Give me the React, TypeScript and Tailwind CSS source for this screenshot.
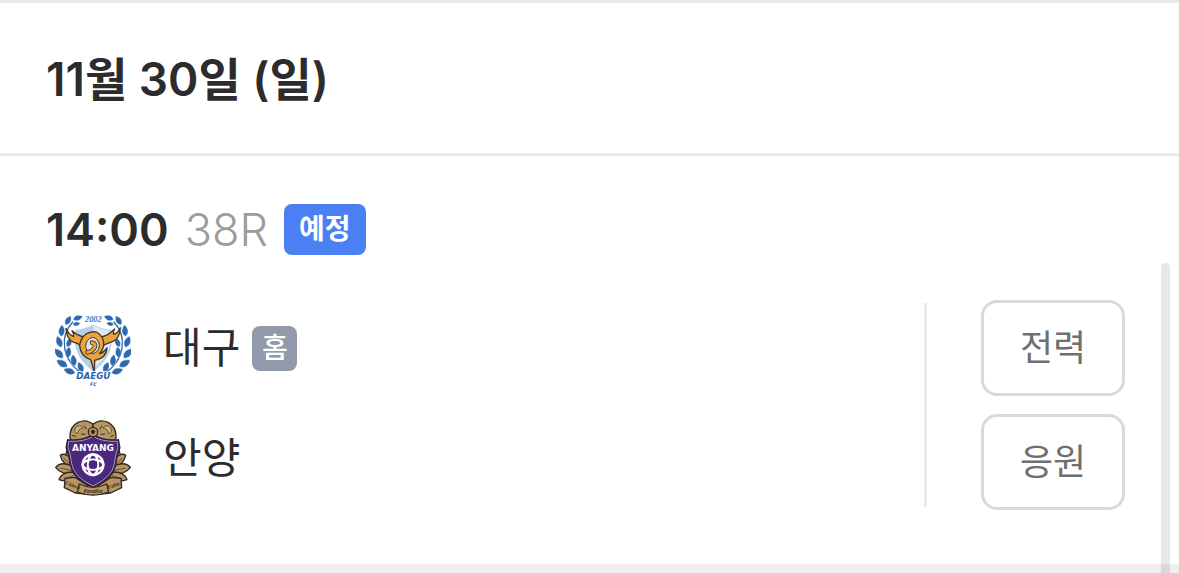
import type { ReactNode } from 'react'

type Team = { name: string; home?: boolean; emblem: ReactNode }

// One leaf of the Daegu laurel, pointing up before it is rotated.
const leaf = 'M0 15 C-12 6 -10 -6 0 -17 C10 -6 12 6 0 15Z'

const laurel = [
  { x: 98, y: 39, r: 72, s: 0.95 },
  { x: 69, y: 47, r: 30, s: 1 },
  { x: 94, y: 57, r: 80, s: 0.7 },
  { x: 50, y: 78, r: 4, s: 1.1 },
  { x: 43, y: 111, r: -20, s: 1.15 },
  { x: 72, y: 113, r: 22, s: 0.95 },
  { x: 42, y: 146, r: -42, s: 1.2 },
  { x: 70, y: 143, r: 8, s: 1.05 },
  { x: 52, y: 176, r: -60, s: 1.2 },
  { x: 86, y: 167, r: -8, s: 1.1 },
  { x: 74, y: 199, r: -72, s: 1.15 },
  { x: 107, y: 187, r: -24, s: 1.05 },
]

function LaurelHalf() {
  return (
    <g>
      <path d="M84 50 C43 93 49 164 111 205" fill="none" stroke="#2d69b0" strokeWidth="4" />
      {laurel.map((l) => (
        <path
          key={`${l.x}-${l.y}`}
          d={leaf}
          transform={`translate(${l.x} ${l.y}) rotate(${l.r}) scale(${l.s})`}
          fill="#2d69b0"
          stroke="#fff"
          strokeWidth="1"
        />
      ))}
    </g>
  )
}

function DaeguEmblem() {
  return (
    <svg viewBox="30 15 228 228" className="size-[76px] shrink-0" role="img" aria-label="대구 엠블럼">
      <LaurelHalf />
      <g transform="translate(290 0) scale(-1 1)">
        <LaurelHalf />
      </g>
      <path
        d="M89 73 Q120 70 145 57 Q170 70 201 73 L202 116 Q196 164 145 203 Q94 164 88 116Z"
        fill="#b4d1e9"
        stroke="#fff"
        strokeWidth="4"
      />
      <path d="M145 62 Q168 74 195 77 L196 116 Q189 156 145 193Z" fill="#dceaf5" />
      <text
        x="145"
        y="51"
        textAnchor="middle"
        fontSize="25"
        fontStyle="italic"
        fontWeight="700"
        fontFamily="Liberation Serif, serif"
        fill="#3c78b8"
      >
        2002
      </text>
      <g stroke="#41352c" strokeWidth="4" strokeLinejoin="round" fill="#eda33d">
        <path d="M112 128 Q100 113 86 112 Q65 104 63 70 Q71 89 86 95 Q87 86 81 77 Q99 93 122 97 L128 108Z" />
        <path d="M166 126 Q184 115 204 109 Q224 101 226 68 Q218 85 206 88 Q204 80 209 72 Q191 91 168 96 L158 106Z" />
        <path d="M147 80 Q109 83 104 122 Q107 155 137 164 L148 201 L149 166 Q184 160 186 129 Q176 143 163 146 Q184 124 172 98 Q161 81 147 80Z" />
      </g>
      <path
        d="M143 97 Q123 102 122 124 Q124 142 143 146 Q162 142 163 121 Q161 101 143 97Z"
        fill="#d9e7f2"
        stroke="#41352c"
        strokeWidth="3"
      />
      <path
        d="M128 142 Q146 137 150 124 Q150 113 141 113"
        fill="none"
        stroke="#41352c"
        strokeWidth="14"
        strokeLinecap="round"
      />
      <path
        d="M128 142 Q146 137 150 124 Q150 113 141 113"
        fill="none"
        stroke="#eda33d"
        strokeWidth="9"
        strokeLinecap="round"
      />
      <g
        textAnchor="middle"
        fontWeight="700"
        fontStyle="italic"
        fontFamily="DejaVu Sans, sans-serif"
        fill="#2764aa"
        stroke="#fff"
        strokeWidth="4"
        paintOrder="stroke"
      >
        <text x="145" y="222" fontSize="26">
          DAEGU
        </text>
        <text x="145" y="242" fontSize="14">
          FC
        </text>
      </g>
    </svg>
  )
}

function AnyangHalf() {
  return (
    <g stroke="#342823" strokeWidth="4" strokeLinejoin="round" fill="#b79863">
      <path d="M144 37 Q124 20 99 31 Q73 44 75 79 L86 92 Q119 88 144 69Z" />
      <path d="M76 100 Q58 120 64 142 L90 172 L90 120Z" />
      <path d="M80 140 Q58 120 46 130 Q50 154 90 176Z" />
      <path d="M78 160 Q46 148 32 166 Q49 190 98 186Z" />
      <path d="M82 180 Q50 180 42 203 Q65 212 104 200Z" />
      <path d="M60 199 L90 196 L128 220 L122 246 L91 243 L58 227Z" />
      <path d="M91 47 Q105 35 114 48 Q99 49 98 65 Q85 62 91 47Z" fill="#d2b67d" strokeWidth="2" />
      <path d="M46 168 L88 177 M56 138 L84 165 M56 201 L88 190" fill="none" strokeWidth="2" />
      <path d="M82 71 Q89 68 92 76 M108 66 L121 67 M117 41 L124 52" fill="none" strokeWidth="3" />
    </g>
  )
}

function AnyangEmblem() {
  return (
    <svg viewBox="30 24 228 228" className="size-[76px] shrink-0" role="img" aria-label="안양 엠블럼">
      <AnyangHalf />
      <g transform="translate(288 0) scale(-1 1)">
        <AnyangHalf />
      </g>
      <path
        d="M69 85 Q116 88 144 69 Q172 88 219 85 L223 107 Q214 127 211 155 Q205 198 144 226 Q83 198 77 155 Q74 127 65 107Z"
        fill="#4b287d"
        stroke="#30203f"
        strokeWidth="7"
      />
      <path
        d="M71 88 Q116 90 144 73 Q172 90 217 88 L219 107 Q211 127 208 155 Q202 195 144 222 Q86 195 80 155 Q77 127 69 107Z"
        fill="#4b287d"
        stroke="#d8cfe2"
        strokeWidth="2"
      />
      <circle cx="144" cy="60" r="14" fill="#b79863" stroke="#342823" strokeWidth="4" />
      <path d="M144 52 L151 58 L148 66 L140 66 L137 58Z" fill="#342823" />
      <text
        x="144"
        y="117"
        textAnchor="middle"
        fontSize="27"
        fontWeight="700"
        fontFamily="DejaVu Sans, sans-serif"
        fill="#fff"
      >
        ANYANG
      </text>
      <g fill="none" stroke="#fff" strokeWidth="7">
        <circle cx="144" cy="158" r="31" />
        <ellipse cx="144" cy="158" rx="15" ry="31" />
        <ellipse cx="144" cy="158" rx="31" ry="15" />
      </g>
      <path d="M134 148 Q144 142 154 148 Q160 158 154 168 Q144 174 134 168 Q128 158 134 148Z" fill="#4b287d" />
      <path d="M103 216 Q144 236 185 216 L191 240 Q144 259 97 240Z" fill="#b79863" stroke="#342823" strokeWidth="4" />
      <g
        fill="#342823"
        textAnchor="middle"
        fontSize="16"
        fontWeight="700"
        fontStyle="italic"
        fontFamily="Liberation Serif, serif"
      >
        <text transform="translate(82 225) rotate(20)">Citizen</text>
        <text x="144" y="243">
          Paradise
        </text>
        <text transform="translate(208 225) rotate(-20)">Fable</text>
      </g>
    </svg>
  )
}

const teams: Team[] = [
  { name: '대구', home: true, emblem: <DaeguEmblem /> },
  { name: '안양', emblem: <AnyangEmblem /> },
]

const actions = ['전력', '응원']

function TeamRow({ team }: { team: Team }) {
  return (
    <li className="flex items-center">
      {team.emblem}
      <span className="ml-8 text-[42px] leading-[60px]">{team.name}</span>
      {team.home && (
        <span className="ml-3 flex size-[45px] items-center justify-center rounded-lg bg-[#9299ab] text-[28px] leading-none font-medium text-white">
          홈
        </span>
      )}
    </li>
  )
}

export default function App() {
  return (
    <div className="relative min-h-screen overflow-hidden bg-[#efefef] font-['Inter','Noto_Sans_CJK_KR',sans-serif] text-[#2c2c2c]">
      <header className="border-y-[3px] border-[#ebebeb] bg-white px-[46px] pt-[46px] pb-11">
        <h1 className="text-[46px] leading-[60px] font-semibold">11월 30일 (일)</h1>
      </header>

      <section className="bg-white px-[46px] pt-12 pb-[54px]">
        <div className="flex items-center">
          <time className="text-[45px] leading-[51px] font-semibold">14:00</time>
          <span className="ml-4 text-[45px] leading-[51px] font-light text-[#9c9c9c]">38R</span>
          <span className="ml-4 rounded-lg bg-[#4a80f3] px-[15px] text-[28px] leading-[51px] font-bold text-white">
            예정
          </span>
        </div>

        <div className="mt-[45px] flex pr-2">
          <ul className="flex flex-1 flex-col gap-[34px] pt-[10px] pl-[9px]">
            {teams.map((team) => (
              <TeamRow key={team.name} team={team} />
            ))}
          </ul>
          <div className="my-[3px] w-[3px] bg-[#ebebeb]" />
          <div className="ml-[54px] flex flex-col gap-[18px]">
            {actions.map((label) => (
              <button
                key={label}
                type="button"
                className="h-24 w-36 rounded-2xl border-[3px] border-[#d9d9d9] text-[36px] text-[#6f6f6f]"
              >
                {label}
              </button>
            ))}
          </div>
        </div>
      </section>

      {/* scroll thumb floats above the content */}
      <div className="absolute top-[263px] right-[9px] bottom-0 w-[9px] rounded-t-full bg-black/9" />
    </div>
  )
}
